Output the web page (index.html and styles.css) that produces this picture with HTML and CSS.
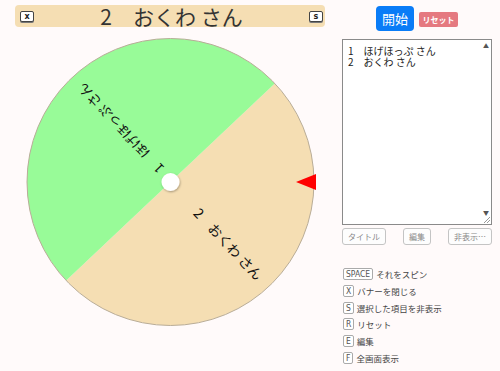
FILE: index.html
```html
<!DOCTYPE html>
<html lang="ja">
<head>
<meta charset="utf-8">
<link rel="stylesheet" href="styles.css">
</head>
<body>
<div class="app">
  <div class="left">
    <div class="banner">
      <span class="bkey">x</span>
      <span class="btext">2　おくわ さん</span>
      <span class="bkey">s</span>
    </div>
    <svg class="wheel" width="335" height="344" viewBox="0 27 335 344" xmlns="http://www.w3.org/2000/svg">
      <defs>
        <filter id="sh" x="-50%" y="-50%" width="200%" height="200%">
          <feDropShadow dx="0.6" dy="1" stdDeviation="0.9" flood-color="#000" flood-opacity="0.35"/>
        </filter>
      </defs>
      <path d="M170.5 182 L274.8 83.4 A143.5 143.5 0 0 1 66.2 280.6 Z" fill="#f5deb3"/>
      <path d="M170.5 182 L66.2 280.6 A143.5 143.5 0 0 1 274.8 83.4 Z" fill="#98fb98"/>
      <circle cx="170.5" cy="182" r="143.5" fill="none" stroke="#b9ad98" stroke-width="1"/>
      <text class="slice" transform="translate(170.5 182) rotate(46.6)" x="131" y="0" text-anchor="end" dominant-baseline="central">2　おくわ さん</text>
      <text class="slice slice-b" transform="translate(170.5 182) rotate(226.6)" x="132" y="0" text-anchor="end" dominant-baseline="central">1　ほげほっぷ さん</text>
      <circle cx="170.5" cy="182" r="9" fill="#ffffff" filter="url(#sh)"/>
      <polygon points="296,182 316,174 316,190" fill="#ff0000"/>
    </svg>
  </div>
  <div class="right">
    <div class="actions">
      <button class="start">開始</button>
      <button class="reset">リセット</button>
    </div>
    <div class="list">
      <div class="lines">1　ほげほっぷ さん
2　おくわ さん</div>
      <span class="sc up">▲</span>
      <span class="sc down">▼</span>
      <span class="grip"></span>
    </div>
    <div class="tools">
      <button class="tool">タイトル</button>
      <button class="tool">編集</button>
      <button class="tool">非表示…</button>
    </div>
    <ul class="keys">
      <li><span class="key">SPACE</span>それをスピン</li>
      <li><span class="key">X</span>バナーを閉じる</li>
      <li><span class="key">S</span>選択した項目を非表示</li>
      <li><span class="key">R</span>リセット</li>
      <li><span class="key">E</span>編集</li>
      <li><span class="key">F</span>全画面表示</li>
    </ul>
  </div>
</div>
</body>
</html>
```
FILE: styles.css
```css
html, body {
  margin: 0;
  padding: 0;
  background: #fffafa;
}
body {
  width: 500px;
  height: 371px;
  overflow: hidden;
  font-family: "Noto Sans CJK JP", "Noto Sans", sans-serif;
  color: #222;
}
.app {
  display: flex;
}
.left {
  width: 335px;
  display: flex;
  flex-direction: column;
}
.banner {
  margin: 5px 0 0 15px;
  width: 310px;
  height: 22px;
  box-sizing: border-box;
  background: #f5deb3;
  border-radius: 4px;
  display: flex;
  align-items: center;
  padding: 0 2px 0 5px;
}
.bkey {
  width: 14px;
  height: 11px;
  box-sizing: border-box;
  border: 1px solid #444;
  border-radius: 2px;
  background: #fff;
  box-shadow: 0 1px 0 #777;
  font-family: "DejaVu Sans", sans-serif;
  font-weight: bold;
  font-size: 8px;
  line-height: 9px;
  text-align: center;
  color: #222;
}
.btext {
  flex: 1;
  text-align: center;
  font-size: 21px;
  line-height: 22px;
  color: #333;
}
.wheel {
  display: block;
}
.slice {
  font-family: "Noto Sans CJK JP", sans-serif;
  font-size: 13.7px;
  fill: #111;
}
.slice-b {
  font-size: 13.4px;
}
.right {
  margin-left: 7px;
  width: 150px;
  display: flex;
  flex-direction: column;
}
.actions {
  margin-top: 6px;
  display: flex;
  justify-content: center;
  align-items: center;
  gap: 5px;
  height: 25px;
}
button {
  font-family: "Noto Sans CJK JP", sans-serif;
  margin: 0;
  cursor: pointer;
}
.start {
  width: 38px;
  height: 25px;
  padding: 0;
  border: none;
  border-radius: 4px;
  background: #0a7cf7;
  color: #fff;
  font-size: 13px;
  line-height: 25px;
}
.reset {
  width: 39px;
  height: 15px;
  padding: 0;
  border: none;
  border-radius: 2px;
  background: #e57980;
  color: #fff;
  font-size: 8px;
  font-weight: bold;
  line-height: 15px;
  margin-top: 1px;
}
.list {
  position: relative;
  margin-top: 8px;
  height: 186px;
  box-sizing: border-box;
  border: 1px solid #8a8a8a;
  background: #fff;
  padding: 5px 5px;
}
.lines {
  font-size: 10px;
  line-height: 11px;
  color: #222;
  white-space: pre;
}
.sc {
  position: absolute;
  right: 2px;
  font-size: 6px;
  line-height: 6px;
  color: #555;
}
.sc.up { top: 3px; }
.sc.down { bottom: 8px; }
.grip {
  position: absolute;
  right: 1px;
  bottom: 1px;
  width: 6px;
  height: 6px;
  background: linear-gradient(135deg, transparent 45%, #999 45%, #999 55%, transparent 55%, transparent 70%, #999 70%, #999 80%, transparent 80%);
}
.tools {
  margin-top: 3px;
  display: flex;
  justify-content: space-between;
}
.tool {
  height: 17px;
  box-sizing: border-box;
  padding: 0 5px;
  border: 1px solid #c4c4c4;
  border-radius: 3px;
  background: #fdfdfd;
  color: #888;
  font-size: 8px;
  line-height: 15px;
}
.keys {
  list-style: none;
  margin: 21px 0 0 1px;
  padding: 0;
}
.keys li {
  display: flex;
  align-items: center;
  height: 16.7px;
  font-size: 8.5px;
  color: #444;
}
.key {
  box-sizing: border-box;
  min-width: 10px;
  height: 12px;
  padding: 0 2px;
  margin-right: 3px;
  border: 1px solid #aaa;
  border-radius: 2px;
  background: #fff;
  font-family: "DejaVu Sans", sans-serif;
  font-stretch: condensed;
  font-size: 8.5px;
  line-height: 10px;
  text-align: center;
  color: #555;
}
```
